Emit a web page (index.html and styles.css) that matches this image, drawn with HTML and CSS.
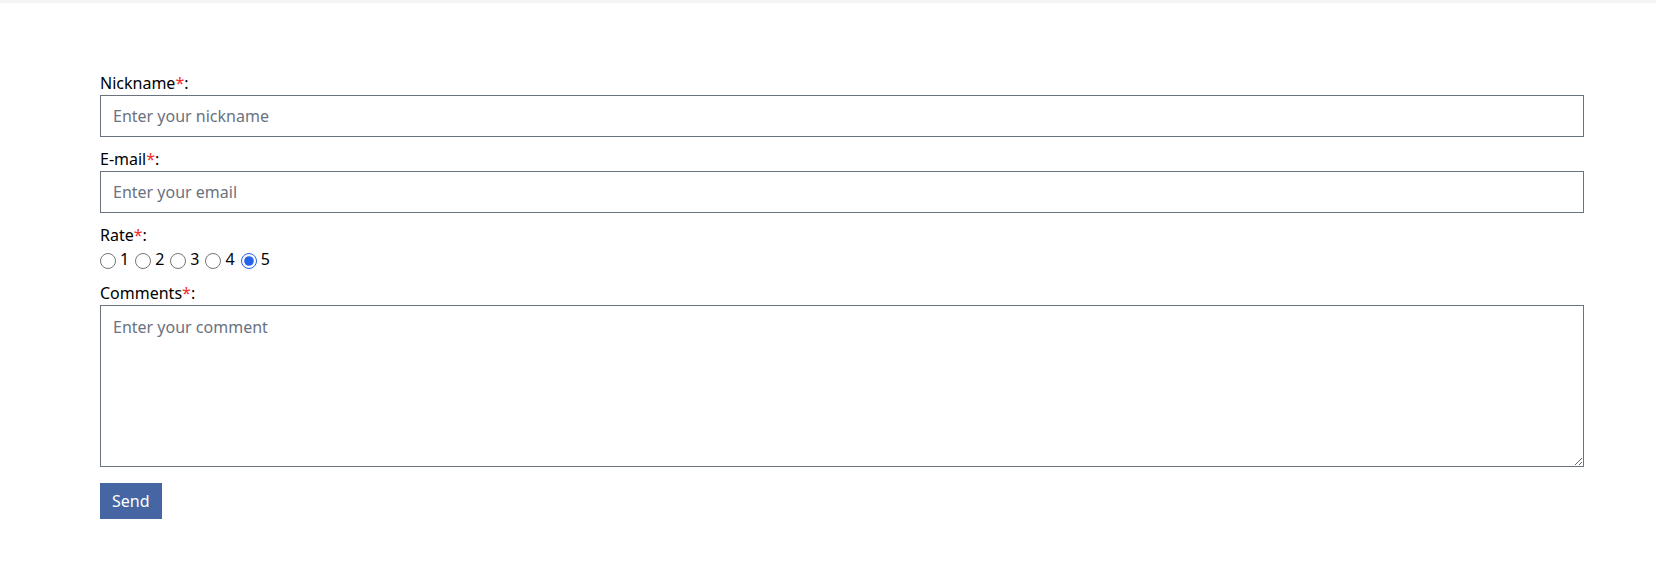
FILE: index.html
```html
<!DOCTYPE html>
<html lang="en">
<head>
    <meta charset="UTF-8">
    <meta name="viewport" content="width=device-width, initial-scale=1.0">
    <title>Feedback</title>
    <link rel="stylesheet" href="styles.css">
</head>
<body>
    <div class="top-bar"></div>
    <div class="container">
        <form id="feedbackForm">
            <label for="nickname">Nickname<span class="req">*</span>:</label>
            <input type="text" id="nickname" placeholder="Enter your nickname">

            <label for="email">E-mail<span class="req">*</span>:</label>
            <input type="email" id="email" placeholder="Enter your email">

            <label>Rate<span class="req">*</span>:</label>
            <div class="rates">
                <label class="rate"><input type="radio" name="rate" value="1">1</label>
                <label class="rate"><input type="radio" name="rate" value="2">2</label>
                <label class="rate"><input type="radio" name="rate" value="3">3</label>
                <label class="rate"><input type="radio" name="rate" value="4">4</label>
                <label class="rate"><input type="radio" name="rate" value="5" checked>5</label>
            </div>

            <label for="comment">Comments<span class="req">*</span>:</label>
            <textarea id="comment" placeholder="Enter your comment"></textarea>

            <div class="actions">
                <button type="submit">Send</button>
            </div>
        </form>
    </div>
</body>
</html>
```

FILE: styles.css
```css
body {
    font-family: "Noto Sans", "Open Sans", Arial, sans-serif;
    font-size: 16px;
    color: #000;
    background-color: #fff;
    margin: 0;
}
.top-bar {
    height: 3px;
    background-color: #f3f4f6;
}
.container {
    padding: 69px 0 0 100px;
}
form {
    display: flex;
    flex-direction: column;
    width: 1484px;
}
label {
    line-height: 22px;
    margin-bottom: 1px;
}
.req {
    color: #ef2b2b;
}
input[type="text"],
input[type="email"],
textarea {
    font-family: inherit;
    font-size: 16px;
    color: #111;
    box-sizing: border-box;
    border: 1px solid #6b7280;
    border-radius: 0;
    padding: 0 12px;
    height: 42px;
    margin: 0 0 11px 0;
    outline: none;
}
textarea {
    height: 162px;
    padding: 10px 12px;
    line-height: 22px;
    margin-bottom: 16px;
}
::placeholder {
    color: #6b7280;
}
.rates {
    display: flex;
    align-items: center;
    height: 25px;
    margin: 0 0 10px 0;
}
.rate {
    display: flex;
    align-items: center;
    margin: 0 6px 0 0;
    line-height: 25px;
}
.rate input {
    width: 16px;
    height: 16px;
    margin: 2px 4px 0 0;
    accent-color: #2563eb;
}
.actions {
    display: flex;
}
button {
    background-color: #4666a3;
    color: #fff;
    font-family: inherit;
    font-size: 16px;
    border: none;
    border-radius: 0;
    height: 36px;
    padding: 0 12px;
    cursor: pointer;
}
button:hover {
    background-color: #3b578e;
}
```
